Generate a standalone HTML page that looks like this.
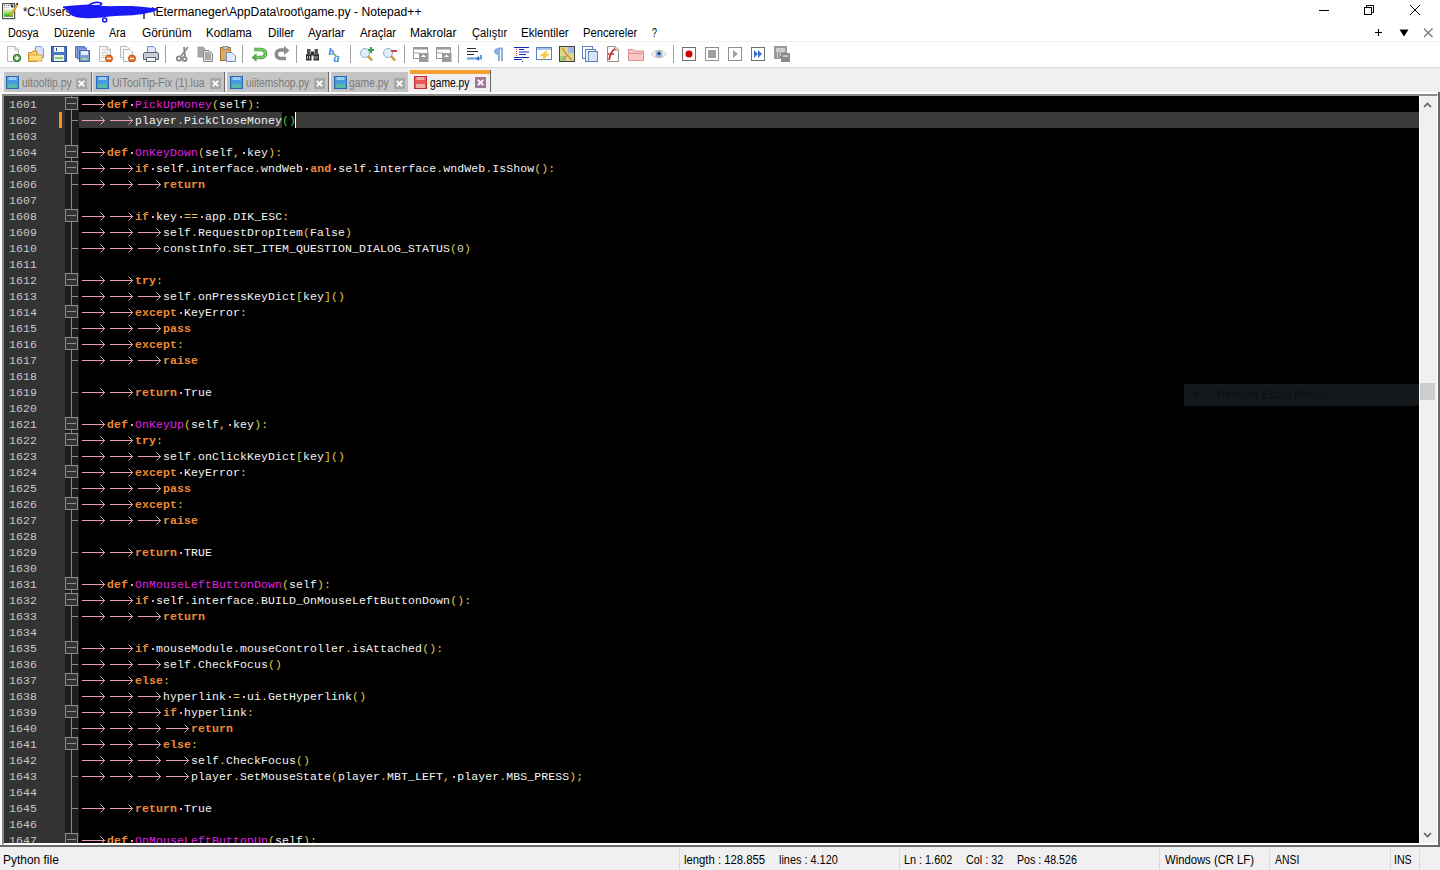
<!DOCTYPE html>
<html><head><meta charset="utf-8"><style>
*{margin:0;padding:0;box-sizing:border-box}
html,body{width:1440px;height:870px;overflow:hidden;background:#fff;position:relative;font-family:"Liberation Sans",sans-serif}
.abs{position:absolute}
.ui{position:absolute;white-space:nowrap;transform-origin:0 0}
#editor{position:absolute;left:4px;top:96px;width:1415px;height:747px;background:#000;overflow:hidden}
#lnm{position:absolute;left:4px;top:96px;width:61px;height:747px;background:#333}
#fm{position:absolute;left:65px;top:96px;width:14px;height:747px;background:#1e1e1e}
.ln{position:absolute;height:16px;line-height:16px;font-family:"Liberation Mono",monospace;font-size:11.5px;letter-spacing:0.1px;white-space:pre;color:#f4f4f4}
.num{position:absolute;left:4px;width:33px;text-align:right;height:16px;line-height:16px;font-family:"Liberation Mono",monospace;font-size:11.5px;letter-spacing:0.1px;color:#c8c8c8}
.kw{color:#ee8a36;font-weight:bold}
.def{color:#e020e0}
.op{color:#e0cc40}
.id{color:#f4f4f4}
.num2{color:#d0d0d0}
.d{position:absolute;width:2px;height:2px;background:#eba0ac}
#clip{position:absolute;left:0;top:0;width:1440px;height:843px;overflow:hidden}
</style></head>
<body>
<div class="abs" style="left:0;top:41px;width:1440px;height:1px;background:#f0f0f0"></div>
<div class="abs" style="left:0;top:67px;width:1440px;height:1px;background:#dcdcdc"></div>
<div class="abs" style="left:0;top:68px;width:1440px;height:24px;background:#f0f0f0"></div>
<div class="abs" style="left:4px;top:72px;width:86.5px;height:20px;background:#c4c4c4"></div><div class="abs" style="left:90.5px;top:72px;width:1px;height:20px;background:#6a6a6a"></div><div class="abs" style="left:92.6px;top:72px;width:131.8px;height:20px;background:#c4c4c4"></div><div class="abs" style="left:224.4px;top:72px;width:1px;height:20px;background:#6a6a6a"></div><div class="abs" style="left:227px;top:72px;width:101.30000000000001px;height:20px;background:#c4c4c4"></div><div class="abs" style="left:328.3px;top:72px;width:1px;height:20px;background:#6a6a6a"></div><div class="abs" style="left:331px;top:72px;width:77.19999999999999px;height:20px;background:#c4c4c4"></div><div class="abs" style="left:409.8px;top:70px;width:80.5px;height:22px;background:#f0f0f0"></div><div class="abs" style="left:409.8px;top:70px;width:80.5px;height:4px;background:#f5a030"></div><div class="abs" style="left:490.3px;top:70px;width:1px;height:22px;background:#6a6a6a"></div><svg class="abs" style="left:6px;top:76px" width="13" height="13" viewBox="0 0 13 13"><rect x="0.5" y="0.5" width="12" height="12" fill="#4a98e0" stroke="#2a6ab8"/><rect x="2.5" y="1" width="8" height="3" fill="#d8ecff" opacity="0.6"/><rect x="2" y="8" width="9" height="4" fill="#58b8a8"/></svg><svg class="abs" style="left:96px;top:76px" width="13" height="13" viewBox="0 0 13 13"><rect x="0.5" y="0.5" width="12" height="12" fill="#4a98e0" stroke="#2a6ab8"/><rect x="2.5" y="1" width="8" height="3" fill="#d8ecff" opacity="0.6"/><rect x="2" y="8" width="9" height="4" fill="#58b8a8"/></svg><svg class="abs" style="left:230px;top:76px" width="13" height="13" viewBox="0 0 13 13"><rect x="0.5" y="0.5" width="12" height="12" fill="#4a98e0" stroke="#2a6ab8"/><rect x="2.5" y="1" width="8" height="3" fill="#d8ecff" opacity="0.6"/><rect x="2" y="8" width="9" height="4" fill="#58b8a8"/></svg><svg class="abs" style="left:334px;top:76px" width="13" height="13" viewBox="0 0 13 13"><rect x="0.5" y="0.5" width="12" height="12" fill="#4a98e0" stroke="#2a6ab8"/><rect x="2.5" y="1" width="8" height="3" fill="#d8ecff" opacity="0.6"/><rect x="2" y="8" width="9" height="4" fill="#58b8a8"/></svg><svg class="abs" style="left:414px;top:76px" width="13" height="13" viewBox="0 0 13 13"><rect x="0.5" y="0.5" width="12" height="12" fill="#e85a5a" stroke="#c03030"/><rect x="2.5" y="1" width="8" height="3" fill="#fbe8e8" opacity="0.6"/><rect x="2" y="8" width="9" height="4" fill="#f0b0a0"/></svg><svg class="abs" style="left:76px;top:77.5px" width="11" height="11" viewBox="0 0 11 11"><rect width="11" height="11" fill="#a8a8a8"/><path d="M2.8 2.8L8.2 8.2M8.2 2.8L2.8 8.2" stroke="#fff" stroke-width="1.8"/></svg><svg class="abs" style="left:210px;top:77.5px" width="11" height="11" viewBox="0 0 11 11"><rect width="11" height="11" fill="#a8a8a8"/><path d="M2.8 2.8L8.2 8.2M8.2 2.8L2.8 8.2" stroke="#fff" stroke-width="1.8"/></svg><svg class="abs" style="left:314px;top:77.5px" width="11" height="11" viewBox="0 0 11 11"><rect width="11" height="11" fill="#a8a8a8"/><path d="M2.8 2.8L8.2 8.2M8.2 2.8L2.8 8.2" stroke="#fff" stroke-width="1.8"/></svg><svg class="abs" style="left:394px;top:77.5px" width="11" height="11" viewBox="0 0 11 11"><rect width="11" height="11" fill="#a8a8a8"/><path d="M2.8 2.8L8.2 8.2M8.2 2.8L2.8 8.2" stroke="#fff" stroke-width="1.8"/></svg><svg class="abs" style="left:474.5px;top:77.3px" width="11" height="11" viewBox="0 0 11 11"><rect width="11" height="11" fill="#a07a94"/><path d="M2.8 2.8L8.2 8.2M8.2 2.8L2.8 8.2" stroke="#fff" stroke-width="1.8"/></svg>
<svg class="abs" style="left:0;top:0" width="24" height="24" viewBox="0 0 24 24"><defs><linearGradient id="ng" x1="0" y1="0" x2="0" y2="1"><stop offset="0" stop-color="#f0f0d8"/><stop offset="0.45" stop-color="#a8e060"/><stop offset="0.85" stop-color="#40b828"/><stop offset="1" stop-color="#0a5a0a"/></linearGradient></defs><rect x="2.6" y="3.6" width="12" height="15" fill="#fff" stroke="#4a504a" stroke-width="1.2"/><rect x="4" y="9" width="9" height="7.6" fill="url(#ng)"/><path d="M4 5.6H9.5" stroke="#606060" stroke-width="1" stroke-dasharray="1 1"/><path d="M4.2 7.5H9" stroke="#b0c0d0" stroke-width="0.8"/><path d="M10.5 4.2H12.5L13.6 6.5V7.5H11Z" fill="#3a4060"/><path d="M10 15.8L16.2 4.6L17.6 5.6L11.4 16.4Z" fill="#e8b830" stroke="#b08010" stroke-width="0.5"/><path d="M15.8 4.2L16.8 2.8L18.2 3.6L17.8 5.2Z" fill="#5a0a20"/></svg>
<svg class="abs" style="left:1300px;top:0" width="140" height="42" viewBox="0 0 140 42" fill="none" stroke="#000"><path d="M19 10.5H29"/><rect x="64.5" y="7.5" width="7" height="7"/><path d="M66.5 7.5V5.5H73.5V12.5H71.5"/><path d="M110 5L120 15M120 5L110 15"/><path d="M75 32.5H82M78.5 29V36" stroke-width="1.1"/><path d="M99.5 29.5H108.5L104 36.5Z" fill="#000" stroke="none"/><path d="M124 28.5L132.5 37M132.5 28.5L124 37" stroke="#707070" stroke-width="1.1"/></svg>
<svg class="abs" style="left:5px;top:46px" width="16" height="16" viewBox="0 0 16 16"><path d="M2.5 0.5H10L13.5 4V15.5H2.5Z" fill="#fafafa" stroke="#b8b8b8"/><path d="M10 0.5V4H13.5" fill="none" stroke="#b8b8b8"/><circle cx="12" cy="12" r="3.7" fill="#5aa848" stroke="#2e6e28"/><path d="M9.8 12H14.2M12 9.8V14.2" stroke="#fff" stroke-width="1.4"/></svg><svg class="abs" style="left:28px;top:46px" width="16" height="16" viewBox="0 0 16 16"><path d="M7.5 0.5H13L15.5 3V11.5H7.5Z" fill="#d8e4fa" stroke="#7c9ad0"/><path d="M0.5 6.5H4L5 5H9V15.5H0.5Z" fill="#f8d070" stroke="#d0902a"/><rect x="1" y="9" width="13" height="6" fill="#fce080" stroke="#d89a30" stroke-width="0.8"/></svg><svg class="abs" style="left:51px;top:46px" width="16" height="16" viewBox="0 0 16 16"><rect x="0.5" y="0.5" width="15" height="15" fill="#4a78c8" stroke="#2d4f95"/><rect x="3" y="1" width="10" height="5" fill="#f4f8ff"/><rect x="5" y="2" width="1" height="3" fill="#2d4f95"/><rect x="3" y="9" width="10" height="6" fill="#e8f4e0"/><rect x="4" y="11" width="8" height="2" fill="#8cc870"/></svg><svg class="abs" style="left:75px;top:46px" width="16" height="16" viewBox="0 0 16 16"><rect x="0.5" y="0.5" width="9" height="11" fill="#90a8e0" stroke="#5a78c0"/><rect x="2.5" y="2" width="9" height="11" fill="#90a8e0" stroke="#5a78c0"/><rect x="4.5" y="4.5" width="10" height="11" fill="#7c9ad8" stroke="#4060a8"/><rect x="6" y="5" width="7" height="4" fill="#e8eefa"/><rect x="7" y="12" width="5" height="2" fill="#a8d890"/></svg><svg class="abs" style="left:97px;top:46px" width="16" height="16" viewBox="0 0 16 16"><path d="M2.5 0.5H10L13.5 4V15.5H2.5Z" fill="#fafafa" stroke="#b8b8b8"/><path d="M10 0.5V4H13.5" fill="none" stroke="#b8b8b8"/><path d="M4.5 4H9M4.5 6.5H11M4.5 9H11M4.5 11.5H8" stroke="#c8c8c8"/><circle cx="12" cy="12.5" r="3.5" fill="#e8742a" stroke="#c05010"/><path d="M10 12.5H14" stroke="#fff" stroke-width="1.3"/></svg><svg class="abs" style="left:120px;top:46px" width="16" height="16" viewBox="0 0 16 16"><path d="M0.5 0.5H7L9.5 3V11.5H0.5Z" fill="#fafafa" stroke="#b8b8b8"/><path d="M3.5 3.5H10L12.5 6V15.5H3.5Z" fill="#fafafa" stroke="#b8b8b8"/><circle cx="12" cy="12.5" r="3.5" fill="#e8742a" stroke="#c05010"/><path d="M10 12.5H14" stroke="#fff" stroke-width="1.3"/></svg><svg class="abs" style="left:143px;top:46px" width="16" height="16" viewBox="0 0 16 16"><path d="M4.5 0.5H10.5L12.5 2.5V7.5H4.5Z" fill="#dce8fa" stroke="#7890c0"/><path d="M0.5 8C0.5 6.5 1.5 6.5 3 6.5H14C15.5 6.5 15.5 7.5 15.5 8V13.5H0.5Z" fill="#c8ccd4" stroke="#5a6070"/><rect x="3.5" y="11.5" width="9" height="4" fill="#f4f4f4" stroke="#606878"/></svg><svg class="abs" style="left:175px;top:46px" width="16" height="16" viewBox="0 0 16 16"><path d="M13 1L6 10M9 1L10 10" stroke="#8a8a8a" stroke-width="1.8"/><circle cx="4" cy="12.5" r="2.2" fill="none" stroke="#8a8a8a" stroke-width="1.8"/><circle cx="9.5" cy="13" r="2" fill="none" stroke="#8a8a8a" stroke-width="1.8"/></svg><svg class="abs" style="left:197px;top:46px" width="16" height="16" viewBox="0 0 16 16"><path d="M0.5 0.5H6L8.5 3V11.5H0.5Z" fill="#a8a8a8" stroke="#e8e8e8"/><path d="M1 1H6L8 3V11H1Z" fill="none" stroke="#9a9a9a" stroke-width="0.6"/><path d="M6.5 4.5H12L15.5 8V15.5H6.5Z" fill="#a8a8a8" stroke="#8a8a8a"/><path d="M7.5 5.5H11.5L14.5 8.5V14.5H7.5Z" fill="none" stroke="#f0f0f0" stroke-width="0.8"/></svg><svg class="abs" style="left:220px;top:46px" width="16" height="16" viewBox="0 0 16 16"><rect x="0.5" y="1.5" width="10" height="13" fill="#e0a860" stroke="#a87030"/><rect x="3" y="0.5" width="5" height="3" fill="#c8c8c8" stroke="#808080" stroke-width="0.8"/><path d="M6.5 6.5H12L15.5 10V15.5H6.5Z" fill="#e4ecfc" stroke="#6c8cc8"/></svg><svg class="abs" style="left:251px;top:46px" width="16" height="16" viewBox="0 0 16 16"><path d="M5 11.5H10.5A4 4 0 0 0 10.5 3.5H3" fill="none" stroke="#3f9a3a" stroke-width="3.6"/><path d="M5 11.5H10.5A4 4 0 0 0 10.5 3.5H3" fill="none" stroke="#7ccc6c" stroke-width="2"/><path d="M0.5 11.5L5.5 7V16Z" fill="#5aaa4a"/></svg><svg class="abs" style="left:274px;top:46px" width="16" height="16" viewBox="0 0 16 16"><path d="M10 4H6.5A4 4 0 0 0 6.5 12.5H12" fill="none" stroke="#8c8c8c" stroke-width="3.6"/><path d="M15.5 4.5L10 0V9Z" fill="#8c8c8c"/></svg><svg class="abs" style="left:305px;top:46px" width="16" height="16" viewBox="0 0 16 16"><path d="M1 8H6.5V14.5H1Z M8.5 8H14V14.5H8.5Z" fill="#303030"/><rect x="2" y="3" width="3.5" height="6" fill="#505050"/><rect x="9.5" y="3" width="3.5" height="6" fill="#505050"/><rect x="6" y="5.5" width="3" height="4" fill="#303030"/><rect x="2" y="10" width="1" height="3" fill="#b0b0b0"/><rect x="4" y="10" width="1" height="3" fill="#b0b0b0"/><rect x="9.5" y="10" width="1" height="3" fill="#b0b0b0"/><rect x="11.5" y="10" width="1" height="3" fill="#b0b0b0"/></svg><svg class="abs" style="left:328px;top:46px" width="16" height="16" viewBox="0 0 16 16"><text x="0.5" y="9" font-family="Liberation Serif" font-style="italic" font-weight="bold" font-size="11" fill="#3a78d8">b</text><text x="5.5" y="16" font-family="Liberation Serif" font-style="italic" font-weight="bold" font-size="12" fill="#3a90e0">a</text><path d="M5 7L8.5 10.5" stroke="#60b060" stroke-width="1.5"/></svg><svg class="abs" style="left:359px;top:46px" width="16" height="16" viewBox="0 0 16 16"><circle cx="6" cy="7" r="4.5" fill="#e0ecf8" stroke="#8ab0d0"/><path d="M9 10L13 14.5" stroke="#c89a30" stroke-width="2.5"/><path d="M9 4H15M12 1V7" stroke="#3aa040" stroke-width="2"/></svg><svg class="abs" style="left:382px;top:46px" width="16" height="16" viewBox="0 0 16 16"><circle cx="6" cy="7" r="4.5" fill="#e0ecf8" stroke="#8ab0d0"/><path d="M9 10L13 14.5" stroke="#c89a30" stroke-width="2.5"/><path d="M9 5H15" stroke="#e04040" stroke-width="2"/></svg><svg class="abs" style="left:413px;top:46px" width="16" height="16" viewBox="0 0 16 16"><rect x="0.5" y="1.5" width="14" height="11" fill="#fff" stroke="#9a9a9a"/><rect x="0" y="1" width="15" height="2.5" fill="#9a9a9a"/><path d="M0.5 7H7" stroke="#9a9a9a"/><rect x="6" y="7" width="9.5" height="9" fill="#9a9a9a"/><path d="M8 11L10.5 8.5L13 11Z" fill="#fff"/></svg><svg class="abs" style="left:436px;top:46px" width="16" height="16" viewBox="0 0 16 16"><rect x="0.5" y="1.5" width="14" height="11" fill="#fff" stroke="#9a9a9a"/><rect x="0" y="1" width="15" height="2.5" fill="#9a9a9a"/><path d="M0.5 7H7" stroke="#9a9a9a"/><rect x="6" y="7" width="9.5" height="9" fill="#9a9a9a"/><path d="M8 11L10.5 8.5L13 11Z" fill="#fff"/></svg><svg class="abs" style="left:467px;top:46px" width="16" height="16" viewBox="0 0 16 16"><path d="M0 2.5H9M0 5.5H11M0 8.5H7" stroke="#303030"/><path d="M0 12.5H14V9" fill="none" stroke="#6a9ad8" stroke-width="2"/><path d="M9 12.5L12 10V15Z" fill="#3a6ab8"/></svg><svg class="abs" style="left:490px;top:46px" width="16" height="16" viewBox="0 0 16 16"><path d="M8 2.5H13M9 2V15M12 2V15" stroke="#88aee0" stroke-width="2"/><path d="M9 2C5 2 4 4 4 5.5C4 7.5 6 9 9 9Z" fill="#88aee0"/></svg><svg class="abs" style="left:514px;top:46px" width="16" height="16" viewBox="0 0 16 16"><path d="M0 1.5H15M5 3.5H10M5 6H15M5 8.5H12M0 11.5H15M0 13.5H8" stroke="#1428b0" stroke-width="1.2"/><path d="M2.5 3V10" stroke="#e03050" stroke-dasharray="1 1"/><path d="M8 15.5H9" stroke="#1428b0"/></svg><svg class="abs" style="left:536px;top:46px" width="16" height="16" viewBox="0 0 16 16"><rect x="0.5" y="1.5" width="15" height="12" fill="#fff" stroke="#5a80c0"/><rect x="1" y="2" width="14" height="2" fill="#a8c4ec"/><path d="M10 5L4 10H8L5.5 15L13 8H9L11 5Z" fill="#f4d040" stroke="#e0b020" stroke-width="0.5"/></svg><svg class="abs" style="left:559px;top:46px" width="16" height="16" viewBox="0 0 16 16"><rect x="0.5" y="0.5" width="15" height="15" fill="#d8d890" stroke="#404040"/><rect x="9" y="1" width="6" height="6" fill="#a0b8e0"/><rect x="1" y="10" width="6" height="5" fill="#a0d080"/><path d="M3 2L8 9L13 14" stroke="#e09030" stroke-width="1.6" fill="none"/><path d="M8 9L4 14" stroke="#d06040" stroke-width="1"/></svg><svg class="abs" style="left:582px;top:46px" width="16" height="16" viewBox="0 0 16 16"><rect x="0.5" y="0.5" width="10" height="12" fill="#fff" stroke="#5a80c0"/><rect x="3.5" y="3.5" width="10" height="12" fill="#eaf0fc" stroke="#5a80c0"/><rect x="6.5" y="5.5" width="9" height="10" fill="#d8e4f8" stroke="#5a80c0"/></svg><svg class="abs" style="left:605px;top:46px" width="16" height="16" viewBox="0 0 16 16"><path d="M2.5 0.5H10L13.5 4V15.5H2.5Z" fill="#fff" stroke="#909090"/><path d="M10 0.5V4H13.5" fill="none" stroke="#909090"/><path d="M4 14C5 9 6 5 10 3" stroke="#d03030" stroke-width="1.8" fill="none"/><path d="M3 8H9" stroke="#d03030" stroke-width="1.5"/></svg><svg class="abs" style="left:628px;top:46px" width="16" height="16" viewBox="0 0 16 16"><path d="M0.5 3.5H5L6 5H15.5V14.5H0.5Z" fill="#f8c8c8" stroke="#e09090"/><path d="M0.5 7.5H15.5" stroke="#e09090"/></svg><svg class="abs" style="left:651px;top:48px" width="16" height="12" viewBox="0 0 16 12"><path d="M0.5 6C4 1 12 1 15.5 6C12 11 4 11 0.5 6Z" fill="#f8f8f8" stroke="#c8c0b0"/><circle cx="8" cy="6" r="3.5" fill="#90b0e0"/><circle cx="8" cy="5.5" r="1.3" fill="#102040"/></svg><svg class="abs" style="left:682px;top:47px" width="14" height="14" viewBox="0 0 14 14"><rect x="0.5" y="0.5" width="13" height="13" fill="#fff" stroke="#707070"/><circle cx="7" cy="7" r="3.5" fill="#d00000"/></svg><svg class="abs" style="left:705px;top:47px" width="14" height="14" viewBox="0 0 14 14"><rect x="0.5" y="0.5" width="13" height="13" fill="#fff" stroke="#909090"/><rect x="3" y="3" width="8" height="8" fill="#a0a0a0"/></svg><svg class="abs" style="left:728px;top:47px" width="14" height="14" viewBox="0 0 14 14"><rect x="0.5" y="0.5" width="13" height="13" fill="#fff" stroke="#909090"/><path d="M5 3L10 7L5 11Z" fill="#a0a0a0"/></svg><svg class="abs" style="left:751px;top:47px" width="14" height="14" viewBox="0 0 14 14"><rect x="0.5" y="0.5" width="13" height="13" fill="#fff" stroke="#707070"/><path d="M3 3L7 7L3 11Z M7 3L11 7L7 11Z" fill="#3a70d8"/></svg><svg class="abs" style="left:774px;top:46px" width="16" height="16" viewBox="0 0 16 16"><rect x="0" y="0" width="13" height="13" fill="#9a9a9a"/><path d="M2 3H11M2 5H11" stroke="#fff"/><path d="M3 7H4M3 9H4M3 11H4M6 7H7M6 9H7" stroke="#fff"/><rect x="7" y="7" width="9" height="9" fill="#8a8a8a"/><path d="M9 10H14" stroke="#fff"/></svg><div class="abs" style="left:165px;top:45px;width:1px;height:18px;background:#a0a0a0"></div><div class="abs" style="left:242px;top:45px;width:1px;height:18px;background:#a0a0a0"></div><div class="abs" style="left:296px;top:45px;width:1px;height:18px;background:#a0a0a0"></div><div class="abs" style="left:350px;top:45px;width:1px;height:18px;background:#a0a0a0"></div><div class="abs" style="left:404px;top:45px;width:1px;height:18px;background:#a0a0a0"></div><div class="abs" style="left:458px;top:45px;width:1px;height:18px;background:#a0a0a0"></div><div class="abs" style="left:673px;top:45px;width:1px;height:18px;background:#a0a0a0"></div>
<div class="abs" style="left:2px;top:94px;width:1436px;height:751px;border-top:2px solid #8a8a8a;border-left:2px solid #8a8a8a;border-right:1px solid #fff;border-bottom:1px solid #fff"></div><div class="abs" style="left:0;top:845px;width:1440px;height:2px;background:#696969"></div><div class="abs" style="left:1438px;top:92px;width:2px;height:755px;background:#696969"></div>
<div id="clip">
<div id="editor"></div>
<div style="position:absolute;left:79px;top:112px;width:1340px;height:16px;background:#3a3a3a"></div>
<div id="lnm"></div>
<div id="fm"></div>
<div class="abs" style="left:59px;top:112px;width:3px;height:16px;background:#f59020"></div>
<div class="num" style="top:97px">1601</div>
<div class="num" style="top:113px">1602</div>
<div class="num" style="top:129px">1603</div>
<div class="num" style="top:145px">1604</div>
<div class="num" style="top:161px">1605</div>
<div class="num" style="top:177px">1606</div>
<div class="num" style="top:193px">1607</div>
<div class="num" style="top:209px">1608</div>
<div class="num" style="top:225px">1609</div>
<div class="num" style="top:241px">1610</div>
<div class="num" style="top:257px">1611</div>
<div class="num" style="top:273px">1612</div>
<div class="num" style="top:289px">1613</div>
<div class="num" style="top:305px">1614</div>
<div class="num" style="top:321px">1615</div>
<div class="num" style="top:337px">1616</div>
<div class="num" style="top:353px">1617</div>
<div class="num" style="top:369px">1618</div>
<div class="num" style="top:385px">1619</div>
<div class="num" style="top:401px">1620</div>
<div class="num" style="top:417px">1621</div>
<div class="num" style="top:433px">1622</div>
<div class="num" style="top:449px">1623</div>
<div class="num" style="top:465px">1624</div>
<div class="num" style="top:481px">1625</div>
<div class="num" style="top:497px">1626</div>
<div class="num" style="top:513px">1627</div>
<div class="num" style="top:529px">1628</div>
<div class="num" style="top:545px">1629</div>
<div class="num" style="top:561px">1630</div>
<div class="num" style="top:577px">1631</div>
<div class="num" style="top:593px">1632</div>
<div class="num" style="top:609px">1633</div>
<div class="num" style="top:625px">1634</div>
<div class="num" style="top:641px">1635</div>
<div class="num" style="top:657px">1636</div>
<div class="num" style="top:673px">1637</div>
<div class="num" style="top:689px">1638</div>
<div class="num" style="top:705px">1639</div>
<div class="num" style="top:721px">1640</div>
<div class="num" style="top:737px">1641</div>
<div class="num" style="top:753px">1642</div>
<div class="num" style="top:769px">1643</div>
<div class="num" style="top:785px">1644</div>
<div class="num" style="top:801px">1645</div>
<div class="num" style="top:817px">1646</div>
<div class="num" style="top:833px">1647</div>
<svg class="abs" style="left:0;top:0" width="1440" height="843" fill="none" stroke="#8c8c8c" stroke-width="1"><rect x="65.5" y="97.5" width="12" height="12" fill="#333"/><path d="M67 103.5H76"/><path d="M71.5 96V97M71.5 110V112"/><path d="M71.5 112V128M71.5 120.5H78"/><path d="M71.5 128V144"/><rect x="65.5" y="145.5" width="12" height="12" fill="#333"/><path d="M67 151.5H76"/><path d="M71.5 144V145M71.5 158V160"/><rect x="65.5" y="161.5" width="12" height="12" fill="#333"/><path d="M67 167.5H76"/><path d="M71.5 160V161M71.5 174V176"/><path d="M71.5 176V192M71.5 184.5H78"/><path d="M71.5 192V208"/><rect x="65.5" y="209.5" width="12" height="12" fill="#333"/><path d="M67 215.5H76"/><path d="M71.5 208V209M71.5 222V224"/><path d="M71.5 224V240"/><path d="M71.5 240V256M71.5 248.5H78"/><path d="M71.5 256V272"/><rect x="65.5" y="273.5" width="12" height="12" fill="#333"/><path d="M67 279.5H76"/><path d="M71.5 272V273M71.5 286V288"/><path d="M71.5 288V304M71.5 296.5H78"/><rect x="65.5" y="305.5" width="12" height="12" fill="#333"/><path d="M67 311.5H76"/><path d="M71.5 304V305M71.5 318V320"/><path d="M71.5 320V336M71.5 328.5H78"/><rect x="65.5" y="337.5" width="12" height="12" fill="#333"/><path d="M67 343.5H76"/><path d="M71.5 336V337M71.5 350V352"/><path d="M71.5 352V368M71.5 360.5H78"/><path d="M71.5 368V384"/><path d="M71.5 384V400M71.5 392.5H78"/><path d="M71.5 400V416"/><rect x="65.5" y="417.5" width="12" height="12" fill="#333"/><path d="M67 423.5H76"/><path d="M71.5 416V417M71.5 430V432"/><rect x="65.5" y="433.5" width="12" height="12" fill="#333"/><path d="M67 439.5H76"/><path d="M71.5 432V433M71.5 446V448"/><path d="M71.5 448V464M71.5 456.5H78"/><rect x="65.5" y="465.5" width="12" height="12" fill="#333"/><path d="M67 471.5H76"/><path d="M71.5 464V465M71.5 478V480"/><path d="M71.5 480V496M71.5 488.5H78"/><rect x="65.5" y="497.5" width="12" height="12" fill="#333"/><path d="M67 503.5H76"/><path d="M71.5 496V497M71.5 510V512"/><path d="M71.5 512V528M71.5 520.5H78"/><path d="M71.5 528V544"/><path d="M71.5 544V560M71.5 552.5H78"/><path d="M71.5 560V576"/><rect x="65.5" y="577.5" width="12" height="12" fill="#333"/><path d="M67 583.5H76"/><path d="M71.5 576V577M71.5 590V592"/><rect x="65.5" y="593.5" width="12" height="12" fill="#333"/><path d="M67 599.5H76"/><path d="M71.5 592V593M71.5 606V608"/><path d="M71.5 608V624M71.5 616.5H78"/><path d="M71.5 624V640"/><rect x="65.5" y="641.5" width="12" height="12" fill="#333"/><path d="M67 647.5H76"/><path d="M71.5 640V641M71.5 654V656"/><path d="M71.5 656V672M71.5 664.5H78"/><rect x="65.5" y="673.5" width="12" height="12" fill="#333"/><path d="M67 679.5H76"/><path d="M71.5 672V673M71.5 686V688"/><path d="M71.5 688V704"/><rect x="65.5" y="705.5" width="12" height="12" fill="#333"/><path d="M67 711.5H76"/><path d="M71.5 704V705M71.5 718V720"/><path d="M71.5 720V736M71.5 728.5H78"/><rect x="65.5" y="737.5" width="12" height="12" fill="#333"/><path d="M67 743.5H76"/><path d="M71.5 736V737M71.5 750V752"/><path d="M71.5 752V768"/><path d="M71.5 768V784M71.5 776.5H78"/><path d="M71.5 784V800"/><path d="M71.5 800V816M71.5 808.5H78"/><path d="M71.5 816V832"/><rect x="65.5" y="833.5" width="12" height="12" fill="#333"/><path d="M67 839.5H76"/><path d="M71.5 832V833M71.5 846V848"/></svg>
<svg class="abs" style="left:0;top:0" width="1440" height="843" fill="none" stroke="#eba0ac" stroke-width="1"><path d="M82 104.5H105M100.5 100.5L104.5 104.5L100.5 108.5"/><path d="M82 120.5H105M100.5 116.5L104.5 120.5L100.5 124.5"/><path d="M110 120.5H133M128.5 116.5L132.5 120.5L128.5 124.5"/><path d="M82 152.5H105M100.5 148.5L104.5 152.5L100.5 156.5"/><path d="M82 168.5H105M100.5 164.5L104.5 168.5L100.5 172.5"/><path d="M110 168.5H133M128.5 164.5L132.5 168.5L128.5 172.5"/><path d="M82 184.5H105M100.5 180.5L104.5 184.5L100.5 188.5"/><path d="M110 184.5H133M128.5 180.5L132.5 184.5L128.5 188.5"/><path d="M138 184.5H161M156.5 180.5L160.5 184.5L156.5 188.5"/><path d="M82 216.5H105M100.5 212.5L104.5 216.5L100.5 220.5"/><path d="M110 216.5H133M128.5 212.5L132.5 216.5L128.5 220.5"/><path d="M82 232.5H105M100.5 228.5L104.5 232.5L100.5 236.5"/><path d="M110 232.5H133M128.5 228.5L132.5 232.5L128.5 236.5"/><path d="M138 232.5H161M156.5 228.5L160.5 232.5L156.5 236.5"/><path d="M82 248.5H105M100.5 244.5L104.5 248.5L100.5 252.5"/><path d="M110 248.5H133M128.5 244.5L132.5 248.5L128.5 252.5"/><path d="M138 248.5H161M156.5 244.5L160.5 248.5L156.5 252.5"/><path d="M82 280.5H105M100.5 276.5L104.5 280.5L100.5 284.5"/><path d="M110 280.5H133M128.5 276.5L132.5 280.5L128.5 284.5"/><path d="M82 296.5H105M100.5 292.5L104.5 296.5L100.5 300.5"/><path d="M110 296.5H133M128.5 292.5L132.5 296.5L128.5 300.5"/><path d="M138 296.5H161M156.5 292.5L160.5 296.5L156.5 300.5"/><path d="M82 312.5H105M100.5 308.5L104.5 312.5L100.5 316.5"/><path d="M110 312.5H133M128.5 308.5L132.5 312.5L128.5 316.5"/><path d="M82 328.5H105M100.5 324.5L104.5 328.5L100.5 332.5"/><path d="M110 328.5H133M128.5 324.5L132.5 328.5L128.5 332.5"/><path d="M138 328.5H161M156.5 324.5L160.5 328.5L156.5 332.5"/><path d="M82 344.5H105M100.5 340.5L104.5 344.5L100.5 348.5"/><path d="M110 344.5H133M128.5 340.5L132.5 344.5L128.5 348.5"/><path d="M82 360.5H105M100.5 356.5L104.5 360.5L100.5 364.5"/><path d="M110 360.5H133M128.5 356.5L132.5 360.5L128.5 364.5"/><path d="M138 360.5H161M156.5 356.5L160.5 360.5L156.5 364.5"/><path d="M82 392.5H105M100.5 388.5L104.5 392.5L100.5 396.5"/><path d="M110 392.5H133M128.5 388.5L132.5 392.5L128.5 396.5"/><path d="M82 424.5H105M100.5 420.5L104.5 424.5L100.5 428.5"/><path d="M82 440.5H105M100.5 436.5L104.5 440.5L100.5 444.5"/><path d="M110 440.5H133M128.5 436.5L132.5 440.5L128.5 444.5"/><path d="M82 456.5H105M100.5 452.5L104.5 456.5L100.5 460.5"/><path d="M110 456.5H133M128.5 452.5L132.5 456.5L128.5 460.5"/><path d="M138 456.5H161M156.5 452.5L160.5 456.5L156.5 460.5"/><path d="M82 472.5H105M100.5 468.5L104.5 472.5L100.5 476.5"/><path d="M110 472.5H133M128.5 468.5L132.5 472.5L128.5 476.5"/><path d="M82 488.5H105M100.5 484.5L104.5 488.5L100.5 492.5"/><path d="M110 488.5H133M128.5 484.5L132.5 488.5L128.5 492.5"/><path d="M138 488.5H161M156.5 484.5L160.5 488.5L156.5 492.5"/><path d="M82 504.5H105M100.5 500.5L104.5 504.5L100.5 508.5"/><path d="M110 504.5H133M128.5 500.5L132.5 504.5L128.5 508.5"/><path d="M82 520.5H105M100.5 516.5L104.5 520.5L100.5 524.5"/><path d="M110 520.5H133M128.5 516.5L132.5 520.5L128.5 524.5"/><path d="M138 520.5H161M156.5 516.5L160.5 520.5L156.5 524.5"/><path d="M82 552.5H105M100.5 548.5L104.5 552.5L100.5 556.5"/><path d="M110 552.5H133M128.5 548.5L132.5 552.5L128.5 556.5"/><path d="M82 584.5H105M100.5 580.5L104.5 584.5L100.5 588.5"/><path d="M82 600.5H105M100.5 596.5L104.5 600.5L100.5 604.5"/><path d="M110 600.5H133M128.5 596.5L132.5 600.5L128.5 604.5"/><path d="M82 616.5H105M100.5 612.5L104.5 616.5L100.5 620.5"/><path d="M110 616.5H133M128.5 612.5L132.5 616.5L128.5 620.5"/><path d="M138 616.5H161M156.5 612.5L160.5 616.5L156.5 620.5"/><path d="M82 648.5H105M100.5 644.5L104.5 648.5L100.5 652.5"/><path d="M110 648.5H133M128.5 644.5L132.5 648.5L128.5 652.5"/><path d="M82 664.5H105M100.5 660.5L104.5 664.5L100.5 668.5"/><path d="M110 664.5H133M128.5 660.5L132.5 664.5L128.5 668.5"/><path d="M138 664.5H161M156.5 660.5L160.5 664.5L156.5 668.5"/><path d="M82 680.5H105M100.5 676.5L104.5 680.5L100.5 684.5"/><path d="M110 680.5H133M128.5 676.5L132.5 680.5L128.5 684.5"/><path d="M82 696.5H105M100.5 692.5L104.5 696.5L100.5 700.5"/><path d="M110 696.5H133M128.5 692.5L132.5 696.5L128.5 700.5"/><path d="M138 696.5H161M156.5 692.5L160.5 696.5L156.5 700.5"/><path d="M82 712.5H105M100.5 708.5L104.5 712.5L100.5 716.5"/><path d="M110 712.5H133M128.5 708.5L132.5 712.5L128.5 716.5"/><path d="M138 712.5H161M156.5 708.5L160.5 712.5L156.5 716.5"/><path d="M82 728.5H105M100.5 724.5L104.5 728.5L100.5 732.5"/><path d="M110 728.5H133M128.5 724.5L132.5 728.5L128.5 732.5"/><path d="M138 728.5H161M156.5 724.5L160.5 728.5L156.5 732.5"/><path d="M166 728.5H189M184.5 724.5L188.5 728.5L184.5 732.5"/><path d="M82 744.5H105M100.5 740.5L104.5 744.5L100.5 748.5"/><path d="M110 744.5H133M128.5 740.5L132.5 744.5L128.5 748.5"/><path d="M138 744.5H161M156.5 740.5L160.5 744.5L156.5 748.5"/><path d="M82 760.5H105M100.5 756.5L104.5 760.5L100.5 764.5"/><path d="M110 760.5H133M128.5 756.5L132.5 760.5L128.5 764.5"/><path d="M138 760.5H161M156.5 756.5L160.5 760.5L156.5 764.5"/><path d="M166 760.5H189M184.5 756.5L188.5 760.5L184.5 764.5"/><path d="M82 776.5H105M100.5 772.5L104.5 776.5L100.5 780.5"/><path d="M110 776.5H133M128.5 772.5L132.5 776.5L128.5 780.5"/><path d="M138 776.5H161M156.5 772.5L160.5 776.5L156.5 780.5"/><path d="M166 776.5H189M184.5 772.5L188.5 776.5L184.5 780.5"/><path d="M82 808.5H105M100.5 804.5L104.5 808.5L100.5 812.5"/><path d="M110 808.5H133M128.5 804.5L132.5 808.5L128.5 812.5"/><path d="M82 840.5H105M100.5 836.5L104.5 840.5L100.5 844.5"/></svg>
<i class="d" style="left:131px;top:104px"></i>
<div class="ln" style="left:107px;top:97px"><span class="kw">def</span> <span class="def">PickUpMoney</span><span class="op">(</span><span class="id">self</span><span class="op">)</span><span class="op">:</span></div>
<div class="ln" style="left:135px;top:113px"><span class="id">player</span><span class="op">.</span><span class="id">PickCloseMoney</span><span class="op">(</span><span class="op">)</span></div>
<i class="d" style="left:131px;top:152px"></i>
<i class="d" style="left:243px;top:152px"></i>
<div class="ln" style="left:107px;top:145px"><span class="kw">def</span> <span class="def">OnKeyDown</span><span class="op">(</span><span class="id">self</span><span class="op">,</span> <span class="id">key</span><span class="op">)</span><span class="op">:</span></div>
<i class="d" style="left:152px;top:168px"></i>
<i class="d" style="left:306px;top:168px"></i>
<i class="d" style="left:334px;top:168px"></i>
<div class="ln" style="left:135px;top:161px"><span class="kw">if</span> <span class="id">self</span><span class="op">.</span><span class="id">interface</span><span class="op">.</span><span class="id">wndWeb</span> <span class="kw">and</span> <span class="id">self</span><span class="op">.</span><span class="id">interface</span><span class="op">.</span><span class="id">wndWeb</span><span class="op">.</span><span class="id">IsShow</span><span class="op">(</span><span class="op">)</span><span class="op">:</span></div>
<div class="ln" style="left:163px;top:177px"><span class="kw">return</span></div>
<i class="d" style="left:152px;top:216px"></i>
<i class="d" style="left:180px;top:216px"></i>
<i class="d" style="left:201px;top:216px"></i>
<div class="ln" style="left:135px;top:209px"><span class="kw">if</span> <span class="id">key</span> <span class="op">=</span><span class="op">=</span> <span class="id">app</span><span class="op">.</span><span class="id">DIK_ESC</span><span class="op">:</span></div>
<div class="ln" style="left:163px;top:225px"><span class="id">self</span><span class="op">.</span><span class="id">RequestDropItem</span><span class="op">(</span><span class="id">False</span><span class="op">)</span></div>
<div class="ln" style="left:163px;top:241px"><span class="id">constInfo</span><span class="op">.</span><span class="id">SET_ITEM_QUESTION_DIALOG_STATUS</span><span class="op">(</span><span class="num2">0</span><span class="op">)</span></div>
<div class="ln" style="left:135px;top:273px"><span class="kw">try</span><span class="op">:</span></div>
<div class="ln" style="left:163px;top:289px"><span class="id">self</span><span class="op">.</span><span class="id">onPressKeyDict</span><span class="op">[</span><span class="id">key</span><span class="op">]</span><span class="op">(</span><span class="op">)</span></div>
<i class="d" style="left:180px;top:312px"></i>
<div class="ln" style="left:135px;top:305px"><span class="kw">except</span> <span class="id">KeyError</span><span class="op">:</span></div>
<div class="ln" style="left:163px;top:321px"><span class="kw">pass</span></div>
<div class="ln" style="left:135px;top:337px"><span class="kw">except</span><span class="op">:</span></div>
<div class="ln" style="left:163px;top:353px"><span class="kw">raise</span></div>
<i class="d" style="left:180px;top:392px"></i>
<div class="ln" style="left:135px;top:385px"><span class="kw">return</span> <span class="id">True</span></div>
<i class="d" style="left:131px;top:424px"></i>
<i class="d" style="left:229px;top:424px"></i>
<div class="ln" style="left:107px;top:417px"><span class="kw">def</span> <span class="def">OnKeyUp</span><span class="op">(</span><span class="id">self</span><span class="op">,</span> <span class="id">key</span><span class="op">)</span><span class="op">:</span></div>
<div class="ln" style="left:135px;top:433px"><span class="kw">try</span><span class="op">:</span></div>
<div class="ln" style="left:163px;top:449px"><span class="id">self</span><span class="op">.</span><span class="id">onClickKeyDict</span><span class="op">[</span><span class="id">key</span><span class="op">]</span><span class="op">(</span><span class="op">)</span></div>
<i class="d" style="left:180px;top:472px"></i>
<div class="ln" style="left:135px;top:465px"><span class="kw">except</span> <span class="id">KeyError</span><span class="op">:</span></div>
<div class="ln" style="left:163px;top:481px"><span class="kw">pass</span></div>
<div class="ln" style="left:135px;top:497px"><span class="kw">except</span><span class="op">:</span></div>
<div class="ln" style="left:163px;top:513px"><span class="kw">raise</span></div>
<i class="d" style="left:180px;top:552px"></i>
<div class="ln" style="left:135px;top:545px"><span class="kw">return</span> <span class="id">TRUE</span></div>
<i class="d" style="left:131px;top:584px"></i>
<div class="ln" style="left:107px;top:577px"><span class="kw">def</span> <span class="def">OnMouseLeftButtonDown</span><span class="op">(</span><span class="id">self</span><span class="op">)</span><span class="op">:</span></div>
<i class="d" style="left:152px;top:600px"></i>
<div class="ln" style="left:135px;top:593px"><span class="kw">if</span> <span class="id">self</span><span class="op">.</span><span class="id">interface</span><span class="op">.</span><span class="id">BUILD_OnMouseLeftButtonDown</span><span class="op">(</span><span class="op">)</span><span class="op">:</span></div>
<div class="ln" style="left:163px;top:609px"><span class="kw">return</span></div>
<i class="d" style="left:152px;top:648px"></i>
<div class="ln" style="left:135px;top:641px"><span class="kw">if</span> <span class="id">mouseModule</span><span class="op">.</span><span class="id">mouseController</span><span class="op">.</span><span class="id">isAttached</span><span class="op">(</span><span class="op">)</span><span class="op">:</span></div>
<div class="ln" style="left:163px;top:657px"><span class="id">self</span><span class="op">.</span><span class="id">CheckFocus</span><span class="op">(</span><span class="op">)</span></div>
<div class="ln" style="left:135px;top:673px"><span class="kw">else</span><span class="op">:</span></div>
<i class="d" style="left:229px;top:696px"></i>
<i class="d" style="left:243px;top:696px"></i>
<div class="ln" style="left:163px;top:689px"><span class="id">hyperlink</span> <span class="op">=</span> <span class="id">ui</span><span class="op">.</span><span class="id">GetHyperlink</span><span class="op">(</span><span class="op">)</span></div>
<i class="d" style="left:180px;top:712px"></i>
<div class="ln" style="left:163px;top:705px"><span class="kw">if</span> <span class="id">hyperlink</span><span class="op">:</span></div>
<div class="ln" style="left:191px;top:721px"><span class="kw">return</span></div>
<div class="ln" style="left:163px;top:737px"><span class="kw">else</span><span class="op">:</span></div>
<div class="ln" style="left:191px;top:753px"><span class="id">self</span><span class="op">.</span><span class="id">CheckFocus</span><span class="op">(</span><span class="op">)</span></div>
<i class="d" style="left:453px;top:776px"></i>
<div class="ln" style="left:191px;top:769px"><span class="id">player</span><span class="op">.</span><span class="id">SetMouseState</span><span class="op">(</span><span class="id">player</span><span class="op">.</span><span class="id">MBT_LEFT</span><span class="op">,</span> <span class="id">player</span><span class="op">.</span><span class="id">MBS_PRESS</span><span class="op">)</span><span class="op">;</span></div>
<i class="d" style="left:180px;top:808px"></i>
<div class="ln" style="left:135px;top:801px"><span class="kw">return</span> <span class="id">True</span></div>
<i class="d" style="left:131px;top:840px"></i>
<div class="ln" style="left:107px;top:833px"><span class="kw">def</span> <span class="def">OnMouseLeftButtonUp</span><span class="op">(</span><span class="id">self</span><span class="op">)</span><span class="op">:</span></div>
<div class="abs" style="left:282px;top:112px;width:14px;height:16px;background:#000"></div>
<div class="ln" style="left:282px;top:113px;color:#44d444">()</div>
<div class="abs" style="left:295px;top:112px;width:1px;height:16px;background:#fff"></div>
<div class="abs" style="left:1419px;top:96px;width:18px;height:747px;background:#f0f0f0;border-left:1px solid #fff"></div><svg class="abs" style="left:1419px;top:96px" width="18" height="747" fill="none" stroke="#606060" stroke-width="1.6"><path d="M5 11L8.5 7.5L12 11"/><path d="M5 737L8.5 740.5L12 737"/></svg><div class="abs" style="left:1420px;top:383px;width:15px;height:17px;background:#cdcdcd"></div>
<div class="abs" style="left:1184px;top:384px;width:235px;height:22px;background:#15191c"></div><div class="abs" style="left:1192px;top:391px;width:7px;height:7px;background:#0c1418;transform:rotate(45deg)"></div>
</div>
<div class="abs" style="left:0;top:847px;width:1440px;height:23px;background:#f0f0f0"></div><div class="abs" style="left:679px;top:849px;width:1px;height:21px;background:#d8d8d8"></div><div class="abs" style="left:899px;top:849px;width:1px;height:21px;background:#d8d8d8"></div><div class="abs" style="left:1159px;top:849px;width:1px;height:21px;background:#d8d8d8"></div><div class="abs" style="left:1269px;top:849px;width:1px;height:21px;background:#d8d8d8"></div><div class="abs" style="left:1390px;top:849px;width:1px;height:21px;background:#d8d8d8"></div><div class="abs" style="left:1419px;top:849px;width:1px;height:21px;background:#d8d8d8"></div>
<span id="title1" class="ui" style="left:23.00px;top:5.84px;font-size:12px;line-height:12px;color:#000;font-weight:normal;transform:scaleX(0.9349)">*C:\Users</span>
<span id="title2" class="ui" style="left:151.50px;top:5.84px;font-size:12px;line-height:12px;color:#000;font-weight:normal;transform:scaleX(1.0126)">\Etermaneger\AppData\root\game.py - Notepad++</span>
<span id="m_dosya" class="ui" style="left:7.60px;top:27.34px;font-size:12px;line-height:12px;color:#000;font-weight:normal;transform:scaleX(0.8998)">Dosya</span>
<span id="m_duz" class="ui" style="left:53.60px;top:27.34px;font-size:12px;line-height:12px;color:#000;font-weight:normal;transform:scaleX(0.9312)">Düzenle</span>
<span id="m_ara" class="ui" style="left:109.30px;top:27.34px;font-size:12px;line-height:12px;color:#000;font-weight:normal;transform:scaleX(0.8947)">Ara</span>
<span id="m_gor" class="ui" style="left:141.70px;top:27.34px;font-size:12px;line-height:12px;color:#000;font-weight:normal;transform:scaleX(0.9915)">Görünüm</span>
<span id="m_kod" class="ui" style="left:206.10px;top:27.34px;font-size:12px;line-height:12px;color:#000;font-weight:normal;transform:scaleX(0.9667)">Kodlama</span>
<span id="m_dil" class="ui" style="left:267.50px;top:27.34px;font-size:12px;line-height:12px;color:#000;font-weight:normal;transform:scaleX(0.9694)">Diller</span>
<span id="m_aya" class="ui" style="left:308.10px;top:27.34px;font-size:12px;line-height:12px;color:#000;font-weight:normal;transform:scaleX(0.9763)">Ayarlar</span>
<span id="m_arac" class="ui" style="left:359.50px;top:27.34px;font-size:12px;line-height:12px;color:#000;font-weight:normal;transform:scaleX(0.9497)">Araçlar</span>
<span id="m_mak" class="ui" style="left:410.30px;top:27.34px;font-size:12px;line-height:12px;color:#000;font-weight:normal;transform:scaleX(0.9962)">Makrolar</span>
<span id="m_cal" class="ui" style="left:471.70px;top:27.34px;font-size:12px;line-height:12px;color:#000;font-weight:normal;transform:scaleX(0.9288)">Çalıştır</span>
<span id="m_ekl" class="ui" style="left:521.30px;top:27.34px;font-size:12px;line-height:12px;color:#000;font-weight:normal;transform:scaleX(0.9664)">Eklentiler</span>
<span id="m_pen" class="ui" style="left:583.40px;top:27.34px;font-size:12px;line-height:12px;color:#000;font-weight:normal;transform:scaleX(0.9356)">Pencereler</span>
<span id="m_q" class="ui" style="left:652.30px;top:27.34px;font-size:12px;line-height:12px;color:#000;font-weight:normal;transform:scaleX(0.7429)">?</span>
<span id="t1" class="ui" style="left:21.50px;top:76.59px;font-size:12px;line-height:12px;color:#7a7a7a;font-weight:normal;transform:scaleX(0.8672)">uitooltip.py</span>
<span id="t2" class="ui" style="left:112.40px;top:76.59px;font-size:12px;line-height:12px;color:#7a7a7a;font-weight:normal;transform:scaleX(0.8644)">UiToolTip-Fix (1).lua</span>
<span id="t3" class="ui" style="left:245.70px;top:76.59px;font-size:12px;line-height:12px;color:#7a7a7a;font-weight:normal;transform:scaleX(0.8536)">uiitemshop.py</span>
<span id="t4" class="ui" style="left:349.00px;top:76.59px;font-size:12px;line-height:12px;color:#7a7a7a;font-weight:normal;transform:scaleX(0.8637)">game.py</span>
<span id="t5" class="ui" style="left:429.60px;top:76.59px;font-size:12px;line-height:12px;color:#000;font-weight:normal;transform:scaleX(0.8560)">game.py</span>
<span id="s_py" class="ui" style="left:2.80px;top:853.84px;font-size:12px;line-height:12px;color:#000;font-weight:normal;transform:scaleX(0.9954)">Python file</span>
<span id="s_len" class="ui" style="left:684.40px;top:853.84px;font-size:12px;line-height:12px;color:#000;font-weight:normal;transform:scaleX(0.9421)">length : 128.855</span>
<span id="s_lines" class="ui" style="left:778.60px;top:853.84px;font-size:12px;line-height:12px;color:#000;font-weight:normal;transform:scaleX(0.9087)">lines : 4.120</span>
<span id="s_ln" class="ui" style="left:904.20px;top:853.84px;font-size:12px;line-height:12px;color:#000;font-weight:normal;transform:scaleX(0.9031)">Ln : 1.602</span>
<span id="s_col" class="ui" style="left:965.90px;top:853.84px;font-size:12px;line-height:12px;color:#000;font-weight:normal;transform:scaleX(0.9021)">Col : 32</span>
<span id="s_pos" class="ui" style="left:1016.60px;top:853.84px;font-size:12px;line-height:12px;color:#000;font-weight:normal;transform:scaleX(0.8876)">Pos : 48.526</span>
<span id="s_win" class="ui" style="left:1164.60px;top:853.84px;font-size:12px;line-height:12px;color:#000;font-weight:normal;transform:scaleX(0.9400)">Windows (CR LF)</span>
<span id="s_ansi" class="ui" style="left:1274.50px;top:853.84px;font-size:12px;line-height:12px;color:#000;font-weight:normal;transform:scaleX(0.8672)">ANSI</span>
<span id="s_ins" class="ui" style="left:1393.82px;top:853.84px;font-size:12px;line-height:12px;color:#000;font-weight:normal;transform:scaleX(0.8842)">INS</span>
<span id="ov" class="ui" style="left:1216.50px;top:388.84px;font-size:12px;line-height:12px;color:#0b0d0f;font-weight:normal;transform:scaleX(0.9365)">Pencere Ekran Alıntısı</span>
<svg class="abs" style="left:0;top:0" width="180" height="24" viewBox="0 0 180 24"><path d="M144 13V19" stroke="#1a0a10" stroke-width="1.3"/><path d="M63 6.5C72 5.5 82 4.5 90 4.5L101 6C115 6.5 125 5.5 139 6.5L158 8.5L158 10C150 13 140 15.5 120 15.8C108 16 104 18 90 18.3C80 18.3 74 17 71 15C69 12 67 9 63 8Z" fill="#1a1af5"/><path d="M89 5C93 2 100 1.5 101.5 3.5C102.5 5.5 98 6 92 6" fill="none" stroke="#1a1af5" stroke-width="1.7"/><circle cx="104.7" cy="20" r="2" fill="none" stroke="#1a1af5" stroke-width="1.6"/></svg>
</body></html>
